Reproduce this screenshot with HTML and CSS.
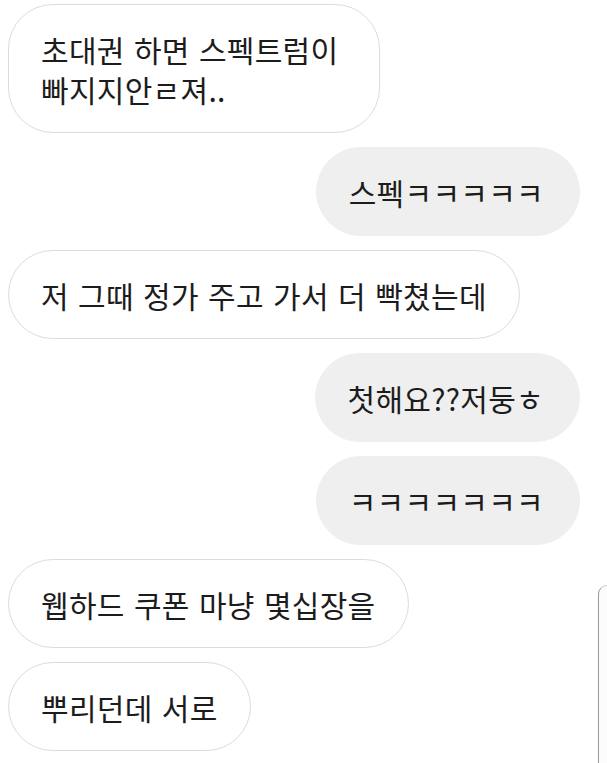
FILE: index.html
```html
<!DOCTYPE html>
<html lang="ko">
<head>
    <meta charset="UTF-8">
    <meta name="viewport" content="width=device-width, initial-scale=1.0">
    <title>대화</title>

    <link rel="stylesheet" href="styles.css">
</head>
<body>
    <div class="chat">
        <div class="msg them long">초대권 하면 스펙트럼이<br>빠지지안ㄹ져..</div>
        <div class="msg me">스펙ㅋㅋㅋㅋㅋ</div>
        <div class="msg them">저 그때 정가 주고 가서 더 빡쳤는데</div>
        <div class="msg me">첫해요??저둥ㅎ</div>
        <div class="msg me">ㅋㅋㅋㅋㅋㅋㅋ</div>
        <div class="msg them">웹하드 쿠폰 마냥 몇십장을</div>
        <div class="msg them">뿌리던데 서로</div>
    </div>

    <div class="edge-panel"></div>
</body>
</html>
```

FILE: styles.css
```css
html, body {
    margin: 0;
    padding: 0;
    background-color: white;
    overflow: hidden;
}

body {
    font-family: "Noto Sans CJK KR", "Noto Sans", sans-serif;
    color: #1c1c1c;
    width: 607px;
    height: 763px;
    position: relative;
}

.chat {
    display: flex;
    flex-direction: column;
    gap: 14px;
    padding: 4px 27px 0 8px;
}

.msg {
    font-size: 30px;
    line-height: 40px;
    letter-spacing: 0.3px;
    word-spacing: 0.5px;
    padding: 24px 32px 23px;
    border-radius: 45px;
    border: 1px solid #dcdcdc;
    white-space: nowrap;
}

.them {
    align-self: flex-start;
    background-color: white;
}

.long {
    width: 372px;
    box-sizing: border-box;
}

.me {
    align-self: flex-end;
    background-color: #efefef;
    border-color: #efefef;
    padding-right: 35px;
}

.edge-panel {
    position: absolute;
    left: 598px;
    top: 585px;
    width: 8px;
    height: 177px;
    background-color: #fcfcfc;
    border-left: 1px solid #9a9a9a;
    border-top: 1px solid #c8c8c8;
    border-top-left-radius: 9px;
}
```
